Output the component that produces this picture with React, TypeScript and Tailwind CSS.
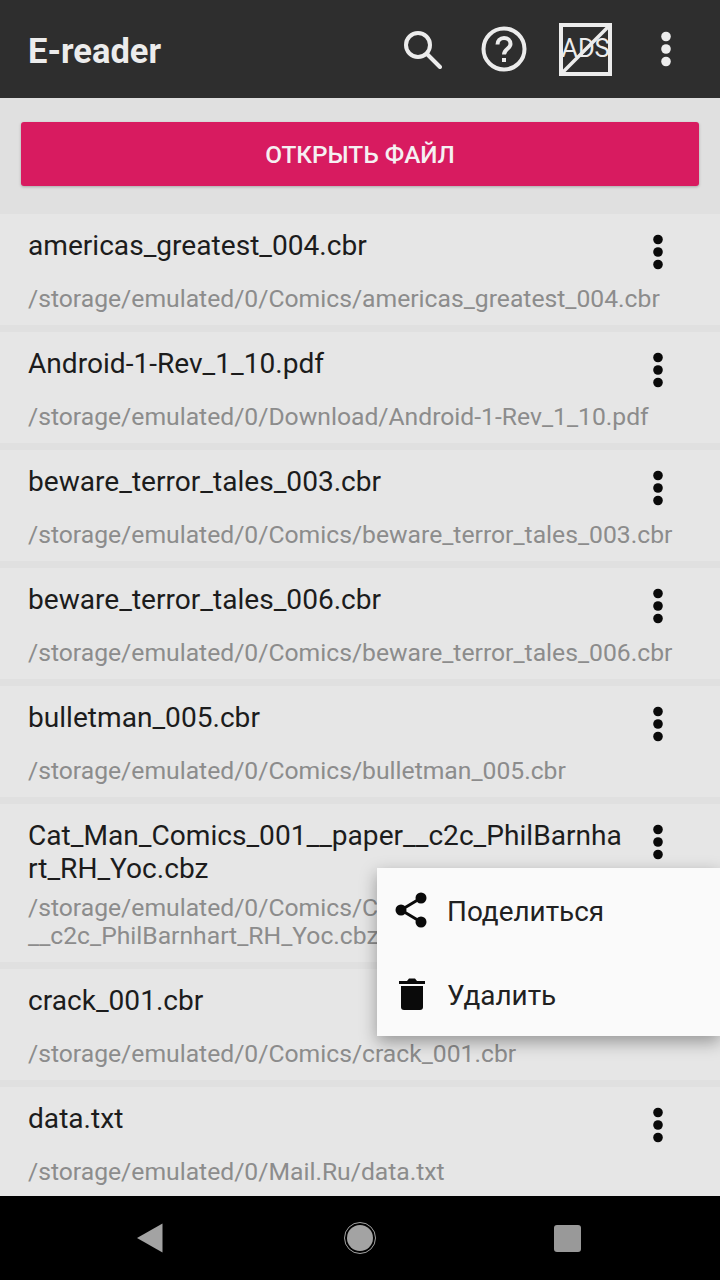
import React from 'react';

type RecentFile = { name: string; path: string };

const files: RecentFile[] = [
  { name: 'americas_greatest_004.cbr', path: '/storage/emulated/0/Comics/americas_greatest_004.cbr' },
  { name: 'Android-1-Rev_1_10.pdf', path: '/storage/emulated/0/Download/Android-1-Rev_1_10.pdf' },
  { name: 'beware_terror_tales_003.cbr', path: '/storage/emulated/0/Comics/beware_terror_tales_003.cbr' },
  { name: 'beware_terror_tales_006.cbr', path: '/storage/emulated/0/Comics/beware_terror_tales_006.cbr' },
  { name: 'bulletman_005.cbr', path: '/storage/emulated/0/Comics/bulletman_005.cbr' },
  {
    name: 'Cat_Man_Comics_001__paper__c2c_PhilBarnhart_RH_Yoc.cbz',
    path: '/storage/emulated/0/Comics/Cat_Man_Comics_001__paper\n__c2c_PhilBarnhart_RH_Yoc.cbz',
  },
  { name: 'crack_001.cbr', path: '/storage/emulated/0/Comics/crack_001.cbr' },
  { name: 'data.txt', path: '/storage/emulated/0/Mail.Ru/data.txt' },
];

const Dots = ({ className }: { className: string }) => (
  <svg viewBox="0 0 12 36" className={className} fill="currentColor">
    <circle cx="6" cy="5.5" r="4.8" />
    <circle cx="6" cy="18" r="4.8" />
    <circle cx="6" cy="30.5" r="4.8" />
  </svg>
);

const FileRow = ({ file }: { file: RecentFile }) => (
  <div className="shrink-0 bg-[#e6e6e6] pl-[28px] pt-[15px] pb-[12px]">
    <div className="flex min-h-[47px] items-start">
      <div className="w-[600px] text-[28.1px] leading-[33px] text-[#1c1c1c] break-all">{file.name}</div>
      <Dots className="ml-[24px] mt-[5px] h-[36px] w-[12px] shrink-0 text-[#0a0a0a]" />
    </div>
    <div className="mt-[9px] text-[24.7px] leading-[28px] text-[#8c8c8c] whitespace-pre">{file.path}</div>
  </div>
);

export default function App() {
  return (
    <div className="relative flex h-[1280px] w-[720px] flex-col overflow-hidden bg-[#e0e0e0] font-['Roboto',sans-serif]">
      {/* Toolbar */}
      <div className="flex h-[98px] shrink-0 items-center bg-[#2e2e2e] pl-[28px] text-[#ececec]">
        <span className="w-[133px] pt-[5px] text-[34.5px] font-bold whitespace-nowrap">E-reader</span>
        <svg viewBox="0 0 40 40" className="ml-[241px] h-[40px] w-[40px]" fill="none" stroke="currentColor" strokeWidth="4">
          <circle cx="16" cy="16" r="12" />
          <path d="M25 25l13 13" strokeLinecap="round" />
        </svg>
        <svg viewBox="0 0 46 46" className="ml-[39px] h-[46px] w-[46px]" fill="none" stroke="currentColor" strokeWidth="4">
          <circle cx="23" cy="23" r="20.5" />
          <path d="M16.5 18.500c0-3.500 2.500-6.500 6.500-6.500s6.500 2.500 6.500 6c0 4.500-6.500 5-6.500 10.500" />
          <rect x="21" y="32" width="4" height="4" fill="currentColor" stroke="none" />
        </svg>
        <div className="relative ml-[32px] flex h-[53px] w-[53px] items-center justify-center border-[4px] border-[#ececec]">
          <span className="text-[25.5px] leading-none">ADS</span>
          <svg viewBox="0 0 45 45" className="absolute inset-0 h-full w-full" stroke="currentColor" strokeWidth="3.5">
            <path d="M0 45L45 0" />
          </svg>
        </div>
        <Dots className="ml-[48px] h-[36px] w-[12px]" />
      </div>

      {/* Open button */}
      <div className="shrink-0 px-[21px] pt-[24px] pb-[28px]">
        <div className="flex h-[64px] items-center justify-center rounded-[3px] bg-[#d81b60] pt-[2px] text-[24.400px] font-medium text-[#f5f0f2] shadow-[0_1px_3px_rgba(0,0,0,0.25)]">
          ОТКРЫТЬ ФАЙЛ
        </div>
      </div>

      {/* Recent files */}
      <div className="flex min-h-0 flex-1 flex-col gap-[7px] overflow-hidden">
        {files.map((file) => (
          <FileRow key={file.path} file={file} />
        ))}
      </div>

      {/* System navigation bar */}
      <div className="relative flex h-[84px] shrink-0 items-center bg-black text-[#a3a3a3]">
        <svg viewBox="0 0 26 30" className="ml-[137px] h-[30px] w-[26px]" fill="currentColor">
          <path d="M0 15L25.500 0.500V29.500Z" />
        </svg>
        <div className="ml-[181px] flex h-[32px] w-[32px] items-center justify-center rounded-full border-[1.500px] border-[#a3a3a3]">
          <div className="h-[26px] w-[26px] rounded-full bg-[#a3a3a3]" />
        </div>
        <div className="ml-[178px] h-[27px] w-[27px] rounded-[3px] bg-[#999999]" />
      </div>

      {/* Overflow menu opened from the Cat_Man row */}
      <div className="absolute left-[377px] top-[868px] flex h-[168px] w-[343px] flex-col bg-[#fafafa] text-[27.9px] text-[#212121] shadow-[0_6px_16px_rgba(0,0,0,0.35)]">
        <div className="flex h-[84px] items-center">
          <svg viewBox="0 0 32 36" className="ml-[18px] h-[36px] w-[32px]" fill="#0a0a0a">
            <circle cx="26" cy="6" r="5.500" />
            <circle cx="6" cy="18" r="5.500" />
            <circle cx="26" cy="30" r="5.500" />
            <path d="M6 18L26 6M6 18L26 30" stroke="#0a0a0a" strokeWidth="3" />
          </svg>
          <span className="ml-[20px] pt-[4px]">Поделиться</span>
        </div>
        <div className="flex h-[84px] items-center">
          <svg viewBox="0 0 26 32" className="ml-[22px] h-[32px] w-[26px]" fill="#0a0a0a">
            <path d="M0 3h8l2-2.500h6L18 3h8v3H0z" />
            <path d="M2 8h22v21a3 3 0 0 1-3 3H5a3 3 0 0 1-3-3z" />
          </svg>
          <span className="ml-[22px] pt-[4px]">Удалить</span>
        </div>
      </div>
    </div>
  );
}
